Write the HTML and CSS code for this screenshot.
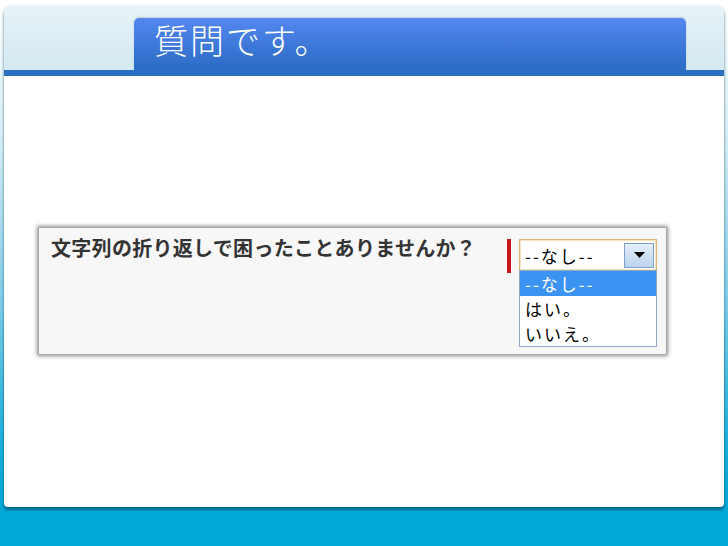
FILE: index.html
```html
<!DOCTYPE html>
<html lang="ja">
<head>
  <meta charset="UTF-8">
  <title>質問です。</title>
  <link rel="stylesheet" href="styles.css">
</head>
<body>
  <div class="slide">
    <div class="slide-head">
      <div class="title-tab">
        <h1>質問です。</h1>
      </div>
    </div>
    <div class="slide-body">
      <div class="question">
        <p class="question-text">文字列の折り返しで困ったことありませんか？</p>
        <div class="answer">
          <span class="required"></span>
          <div class="combo">
            <div class="combo-box">
              <span class="combo-value">--なし--</span>
              <span class="combo-btn">
                <svg width="11" height="6" viewBox="0 0 11 6"><polygon points="0,0 11,0 5.5,6" fill="#000"/></svg>
              </span>
            </div>
            <ul class="combo-list">
              <li class="selected">--なし--</li>
              <li>はい。</li>
              <li>いいえ。</li>
            </ul>
          </div>
        </div>
      </div>
    </div>
  </div>
</body>
</html>
```

FILE: styles.css
```css
html, body {
  margin: 0;
  height: 100%;
}
body {
  background: linear-gradient(#ffffff 0%, #d6eef6 25%, #7fcde8 55%, #1fb0dd 80%, #00a8d8 92%);
  font-family: "Noto Sans CJK JP", "Noto Sans", sans-serif;
  overflow: hidden;
}
.slide {
  margin: 6px 4px 0;
  height: 501px;
  display: flex;
  flex-direction: column;
  border-radius: 6px 6px 4px 4px;
  box-shadow: 0 0 1px rgba(0, 0, 0, 0.35), 0 3px 3px rgba(0, 60, 90, 0.6);
  background: #fff;
  overflow: hidden;
}
.slide-head {
  height: 64px;
  padding-left: 130px;
  padding-right: 38px;
  display: flex;
  align-items: flex-end;
  background: linear-gradient(#e6f3f8, #d4e9f1);
  border-bottom: 6px solid #2a6fc2;
}
.title-tab {
  flex: 1;
  height: 52px;
  border-radius: 5px 5px 0 0;
  background: linear-gradient(#5488f0, #2a6bc4);
  box-shadow: 0 -1px 2px rgba(0, 0, 0, 0.15);
}
.title-tab h1 {
  margin: 0;
  padding: 5px 0 0 20px;
  font-size: 34px;
  line-height: 34px;
  font-weight: 300;
  letter-spacing: 2px;
  color: #fff;
}
.slide-body {
  flex: 1;
  padding: 151px 0 0 34px;
}
.question {
  width: 629px;
  height: 128px;
  box-sizing: border-box;
  display: flex;
  justify-content: space-between;
  align-items: flex-start;
  padding: 9px 9px 0 12px;
  background: #f7f7f7;
  border: 1px solid #a8a8a8;
  box-shadow: 0 0 4px 1px rgba(0, 0, 0, 0.45);
}
.question-text {
  margin: 0;
  font-size: 20px;
  line-height: 22px;
  font-weight: bold;
  letter-spacing: 0.3px;
  color: #333;
}
.answer {
  display: flex;
  align-items: flex-start;
  gap: 8px;
  margin-top: 2px;
}
.required {
  width: 4px;
  height: 34px;
  background: #c8141e;
}
.combo {
  position: relative;
  width: 138px;
}
.combo-box {
  height: 32px;
  box-sizing: border-box;
  display: flex;
  align-items: center;
  justify-content: space-between;
  padding: 0 2px 0 5px;
  background: #fff;
  border: 1px solid #d8b676;
  box-shadow: inset 0 0 0 1px #f3e2bd;
}
.combo-value {
  font-size: 17px;
  line-height: 25px;
  letter-spacing: 2px;
  color: #000;
}
.combo-btn {
  width: 28px;
  height: 23px;
  display: flex;
  align-items: center;
  justify-content: center;
  background: linear-gradient(#e4eef9, #bcd4ee);
  border: 1px solid #7f9fc6;
}
.combo-list {
  position: absolute;
  left: 0;
  right: 0;
  top: 31px;
  margin: 0;
  padding: 0;
  list-style: none;
  background: #fff;
  border: 1px solid #8ea8c8;
}
.combo-list li {
  height: 25px;
  padding-left: 5px;
  font-size: 17px;
  line-height: 25px;
  letter-spacing: 2px;
  color: #000;
}
.combo-list li.selected {
  background: #3c93f2;
  color: #fff;
}
```
